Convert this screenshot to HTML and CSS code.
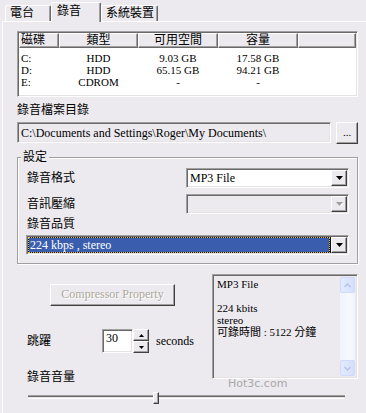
FILE: index.html
```html
<!DOCTYPE html>
<html lang="zh-Hant">
<head>
<meta charset="utf-8">
<title>錄音</title>
<link rel="stylesheet" href="styles.css">
</head>
<body>
<div class="win">
  <div class="tabs">
    <div class="tab tab-radio">電台</div>
    <div class="tab tab-rec active">錄音</div>
    <div class="tab tab-dev">系統裝置</div>
  </div>
  <div class="pane">
    <div class="listview">
      <div class="lv-head">
        <div class="hc c1 left">磁碟</div>
        <div class="hc c2">類型</div>
        <div class="hc c3">可用空間</div>
        <div class="hc c4">容量</div>
        <div class="hc c5"></div>
      </div>
      <div class="lv-body">
        <div class="lv-row"><span class="c1 left">C:</span><span class="c2">HDD</span><span class="c3">9.03 GB</span><span class="c4">17.58 GB</span></div>
        <div class="lv-row"><span class="c1 left">D:</span><span class="c2">HDD</span><span class="c3">65.15 GB</span><span class="c4">94.21 GB</span></div>
        <div class="lv-row"><span class="c1 left">E:</span><span class="c2">CDROM</span><span class="c3">-</span><span class="c4">-</span></div>
      </div>
    </div>

    <div class="dir-label">錄音檔案目錄</div>
    <div class="path-row">
      <div class="textbox path">C:\Documents and Settings\Roger\My Documents\</div>
      <div class="btn browse">...</div>
    </div>

    <fieldset class="group">
      <legend>設定</legend>
      <div class="frow r1">
        <span class="lbl">錄音格式</span>
        <div class="combo">
          <div class="combo-field">MP3 File</div>
          <div class="combo-btn"><svg width="7" height="4" viewBox="0 0 7 4"><path d="M0 0h7L3.5 4z" fill="#000"/></svg></div>
        </div>
      </div>
      <div class="frow r2">
        <span class="lbl">音訊壓縮</span>
        <div class="combo disabled">
          <div class="combo-field"></div>
          <div class="combo-btn"><svg width="8" height="5" viewBox="0 0 8 5"><path d="M1 1h7L4.5 5z" fill="#fff"/><path d="M0 0h7L3.5 4z" fill="#A0A0A0"/></svg></div>
        </div>
      </div>
      <div class="r3">錄音品質</div>
      <div class="combo wide">
        <div class="combo-field sel"><span class="focus">224 kbps , stereo</span></div>
        <div class="combo-btn"><svg width="7" height="4" viewBox="0 0 7 4"><path d="M0 0h7L3.5 4z" fill="#000"/></svg></div>
      </div>
    </fieldset>

    <div class="lower">
      <div class="left-col">
        <div class="btn cbtn">Compressor Property</div>
        <div class="jump-row">
          <span class="jlbl">跳躍</span>
          <div class="spin-edit">30</div>
          <div class="spin">
            <div class="spin-btn"><svg width="5" height="3" viewBox="0 0 5 3"><path d="M2.5 0L5 3H0z" fill="#000"/></svg></div>
            <div class="spin-btn"><svg width="5" height="3" viewBox="0 0 5 3"><path d="M0 0h5L2.5 3z" fill="#000"/></svg></div>
          </div>
          <span class="unit">seconds</span>
        </div>
        <div class="vol-label">錄音音量</div>
      </div>
      <div class="info">
        <div class="info-text">MP3 File<br><br>224 kbits<br>stereo<br>可錄時間 : 5122 分鐘</div>
        <div class="vscroll">
          <div class="sb-btn"><svg width="7" height="5" viewBox="0 0 7 5"><path d="M0.5 4L3.5 1L6.5 4" fill="none" stroke="#B4C4E8" stroke-width="1.5"/></svg></div>
          <div class="sb-track"></div>
          <div class="sb-btn"><svg width="7" height="5" viewBox="0 0 7 5"><path d="M0.5 1L3.5 4L6.5 1" fill="none" stroke="#B4C4E8" stroke-width="1.5"/></svg></div>
        </div>
      </div>
      <div class="watermark">Hot3c.com</div>
    </div>

    <div class="slider">
      <div class="track"></div>
      <div class="thumb"></div>
    </div>
  </div>
</div>
</body>
</html>
```
FILE: styles.css
```css
* { box-sizing: border-box; margin: 0; padding: 0; }
html, body { width: 366px; height: 413px; overflow: hidden; }
body {
  background: #ECEAEF;
  font: 12px/14px "Liberation Serif", "Noto Sans CJK TC", serif;
  color: #000;
}
.win { width: 366px; height: 413px; overflow: hidden; }

/* tabs */
.tabs { display: flex; align-items: flex-end; height: 21px; padding-left: 5px; }
.tab {
  height: 16px;
  line-height: 14px;
  border: 1px solid;
  border-bottom: none;
  border-color: #fff #696969 transparent #fff;
  box-shadow: inset -1px 0 #A0A0A0;
  border-radius: 2px 2px 0 0;
  background: #ECEAEF;
  white-space: nowrap;
}
.tab-radio { width: 46px; padding-left: 4px; }
.tab-rec { width: 50px; padding-left: 5px; }
.tab-dev { width: 57px; padding-left: 4px; }
.tab.active {
  height: 20px;
  margin-bottom: -1px;
  padding-top: 1px;
  position: relative;
  z-index: 1;
}

/* pane */
.pane {
  margin-left: 2px;
  border-top: 1px solid #fff;
  border-left: 1px solid #fff;
  padding: 0 8px 0 14px;
  height: 392px;
}

/* sunken frame */
.listview, .textbox, .combo, .info, .spin-edit {
  border: 1px solid;
  border-color: #A0A0A0 #fff #fff #A0A0A0;
  box-shadow: inset 1px 1px #696969, inset -1px -1px #E3E3E3;
}
/* raised */
.btn, .combo-btn, .spin-btn, .hc, .thumb {
  border: 1px solid;
  border-color: #fff #404040 #404040 #fff;
  box-shadow: inset -1px -1px #A0A0A0;
  background: #ECEAEF;
}

/* list view */
.listview { margin-top: 9px; height: 66px; background: #fff; padding: 1px; }
.lv-head { display: flex; height: 15px; }
.hc { height: 15px; line-height: 13px; text-align: center; border-color: #fff #696969 #696969 #fff; }
.c1 { width: 40px; }
.c2 { width: 79px; }
.c3 { width: 80px; }
.c4 { width: 80px; }
.c5 { flex: 1; }
.hc.left { text-align: left; padding-left: 1px; }
.lv-body { padding-top: 4px; }
.lv-row { display: flex; line-height: 12px; height: 12px; font-size: 11px; }
.lv-row span { text-align: center; white-space: nowrap; }
.lv-row span.left { text-align: left; padding-left: 2px; }

/* directory */
.dir-label { margin-top: 6px; line-height: 14px; }
.path-row { display: flex; margin-top: 5px; height: 22px; }
.textbox.path { width: 314px; height: 21px; padding: 3px 3px 0; line-height: 14px; white-space: nowrap; overflow: hidden; }
.btn.browse { margin-left: 5px; width: 22px; height: 22px; text-align: center; line-height: 18px; font-size: 11px; }

/* group */
.group {
  margin-top: 6px;
  border: 1px solid #A0A0A0;
  box-shadow: inset 1px 1px #fff, 1px 1px #fff;
  padding: 0 0 8px 0;
  min-inline-size: 0;
}
.group legend { margin-left: 3px; padding: 0 2px; line-height: 14px; background: #ECEAEF; }
.frow { display: flex; align-items: center; height: 20px; margin-left: 9px; }
.frow .lbl { width: 159px; }
.r1 { margin-top: 4px; }
.r2 { margin-top: 6px; }
.r3 { margin-top: 3px; margin-left: 9px; line-height: 14px; }

.combo { width: 163px; height: 20px; display: flex; padding: 1px; background: #fff; }
.combo.disabled { background: #ECEAEF; }
.combo.wide { width: 323px; margin: 4px 0 0 8px; }
.combo-field { flex: 1; padding: 1px 2px 0; line-height: 14px; white-space: nowrap; overflow: hidden; }
.combo-btn { width: 16px; height: 16px; display: flex; align-items: center; justify-content: center; padding-left: 1px; }
.combo-field.sel { padding: 0 1px 0 0; background: #111; display: flex; }
.focus {
  flex: 1;
  display: block;
  background: #3A5EAD;
  background-clip: padding-box;
  border: 1px dotted #E6C24A;
  color: #fff;
  padding-left: 1px;
  line-height: 14px;
}

/* lower */
.lower { position: relative; display: grid; grid-template-columns: 195px 146px; margin-top: 10px; height: 110px; }
.left-col { display: flex; flex-direction: column; align-items: flex-start; }
.btn.cbtn {
  margin: 10px 0 0 33px;
  width: 125px;
  height: 22px;
  line-height: 19px;
  text-align: center;
  color: #ACA899;
  text-shadow: 1px 1px #fff;
}
.jump-row { display: flex; margin-top: 23px; height: 24px; }
.jlbl { margin-left: 10px; width: 75px; line-height: 24px; }
.spin-edit { width: 31px; height: 24px; background: #fff; padding: 2px 3px; line-height: 12px; }
.spin { display: flex; flex-direction: column; width: 16px; }
.spin-btn { height: 12px; display: flex; align-items: center; justify-content: center; }
.unit { margin-left: 7px; line-height: 24px; }
.vol-label { margin-top: 17px; margin-left: 10px; line-height: 14px; }

.info { height: 105px; display: flex; padding: 2px; background: #ECEAEF; }
.info-text { flex: 1; padding: 1px 2px 0; font-size: 11px; line-height: 12px; white-space: nowrap; }
.vscroll { width: 15px; display: flex; flex-direction: column; }
.sb-btn {
  height: 16px;
  background: linear-gradient(to right, #E2EBFD, #D4E0FB);
  border: 1px solid #CFDBF8;
  border-radius: 2px;
  display: flex;
  align-items: center;
  justify-content: center;
}
.sb-track { flex: 1; background: linear-gradient(to right, #EEF3FD, #F7F9FE 60%, #EFF4FD); }

.watermark {
  position: absolute;
  left: 211px;
  top: 104px;
  font: 11px/12px "DejaVu Sans", sans-serif;
  color: #A8A8A8;
}

/* slider */
.slider { position: relative; display: flex; align-items: center; margin: 6px 0 0 11px; width: 317px; height: 14px; }
.track { width: 100%; height: 4px; border-top: 1px solid #A0A0A0; border-bottom: 1px solid #fff; background: #696969; box-shadow: inset 0 -1px #E3E3E3; }
.thumb { position: absolute; left: 125px; top: 2px; width: 6px; height: 12px; }
```
